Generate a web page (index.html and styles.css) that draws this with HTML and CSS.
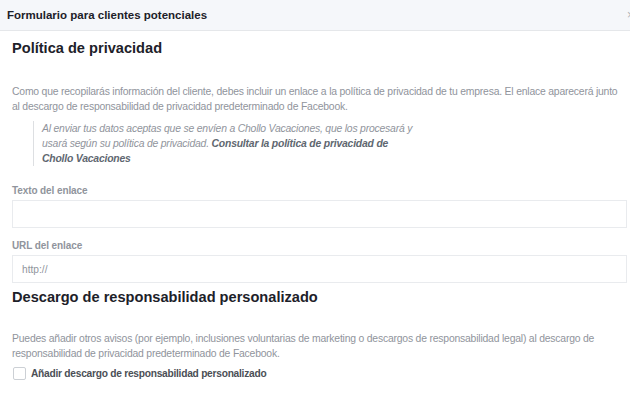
FILE: index.html
```html
<!DOCTYPE html>
<html lang="es">
<head>
<meta charset="utf-8">
<title>Formulario para clientes potenciales</title>
<link rel="stylesheet" href="styles.css">
</head>
<body>
<div class="dialog">
  <div class="header">
    <span class="title">Formulario para clientes potenciales</span>
    <span class="close">×</span>
  </div>
  <div class="content">
    <h2 class="heading">Política de privacidad</h2>
    <p class="desc">Como que recopilarás información del cliente, debes incluir un enlace a la política de privacidad de tu empresa. El enlace aparecerá junto al descargo de responsabilidad de privacidad predeterminado de Facebook.</p>
    <blockquote class="quote">Al enviar tus datos aceptas que se envíen a Chollo Vacaciones, que los procesará y usará según su política de privacidad. <b>Consultar la política de privacidad de Chollo Vacaciones</b></blockquote>
    <label class="field-label">Texto del enlace</label>
    <div class="input"></div>
    <label class="field-label second">URL del enlace</label>
    <div class="input"><span class="placeholder">http://</span></div>
    <h2 class="heading second">Descargo de responsabilidad personalizado</h2>
    <p class="desc desc2">Puedes añadir otros avisos (por ejemplo, inclusiones voluntarias de marketing o descargos de responsabilidad legal) al descargo de responsabilidad de privacidad predeterminado de Facebook.</p>
    <div class="check-row">
      <span class="checkbox"></span>
      <span class="check-label">Añadir descargo de responsabilidad personalizado</span>
    </div>
  </div>
</div>
</body>
</html>
```

FILE: styles.css
```css
html, body {
  margin: 0;
  padding: 0;
  background: #ffffff;
}
body {
  font-family: "Liberation Sans", Arial, Helvetica, sans-serif;
  color: #1d2129;
  width: 630px;
  height: 409px;
  overflow: hidden;
}
.dialog {
  width: 630px;
}
.header {
  height: 31px;
  box-sizing: border-box;
  background: #f5f7fa;
  border-bottom: 1px solid #e5e7ea;
  display: flex;
  align-items: center;
  justify-content: space-between;
  padding-left: 7px;
  overflow: hidden;
}
.title {
  font-size: 11.5px;
  font-weight: bold;
  color: #1d2129;
  padding-bottom: 1px;
}
.close {
  font-size: 12px;
  color: #b0b3b8;
  margin-right: -4px;
}
.content {
  padding: 0 3px 0 12px;
}
.heading {
  margin: 0;
  font-size: 14.6px;
  font-weight: bold;
  line-height: 18px;
  padding-top: 8px;
  color: #1d2129;
}
.heading.second {
  padding-top: 5px;
}
.desc {
  margin: 27px 0 0 0;
  font-size: 10.4px;
  letter-spacing: -0.2px;
  line-height: 15px;
  color: #90949c;
}
.desc2 {
  margin-top: 25px;
}
.quote {
  margin: 7px 0 0 21px;
  padding: 0 0 0 8px;
  border-left: 1px solid #dddfe2;
  font-size: 10.4px;
  letter-spacing: -0.2px;
  line-height: 15px;
  font-style: italic;
  color: #90949c;
  width: 372px;
}
.quote b {
  color: #606770;
}
.field-label {
  display: block;
  margin-top: 18px;
  font-size: 10px;
  letter-spacing: -0.1px;
  font-weight: bold;
  line-height: 14px;
  color: #90949c;
}
.field-label.second {
  margin-top: 11px;
}
.input {
  margin-top: 2px;
  height: 28px;
  box-sizing: border-box;
  border: 1px solid #e9ebee;
  background: #fff;
  display: flex;
  align-items: center;
  padding-left: 9px;
}
.placeholder {
  font-size: 10.2px;
  color: #90949c;
}
.check-row {
  display: flex;
  align-items: center;
  margin-top: 6px;
}
.checkbox {
  width: 11px;
  height: 11px;
  border: 1px solid #ccd0d5;
  border-radius: 2px;
  background: #fff;
  margin-left: 1px;
  margin-right: 5px;
}
.check-label {
  font-size: 10.2px;
  letter-spacing: -0.25px;
  font-weight: bold;
  color: #4b4f56;
}
```
